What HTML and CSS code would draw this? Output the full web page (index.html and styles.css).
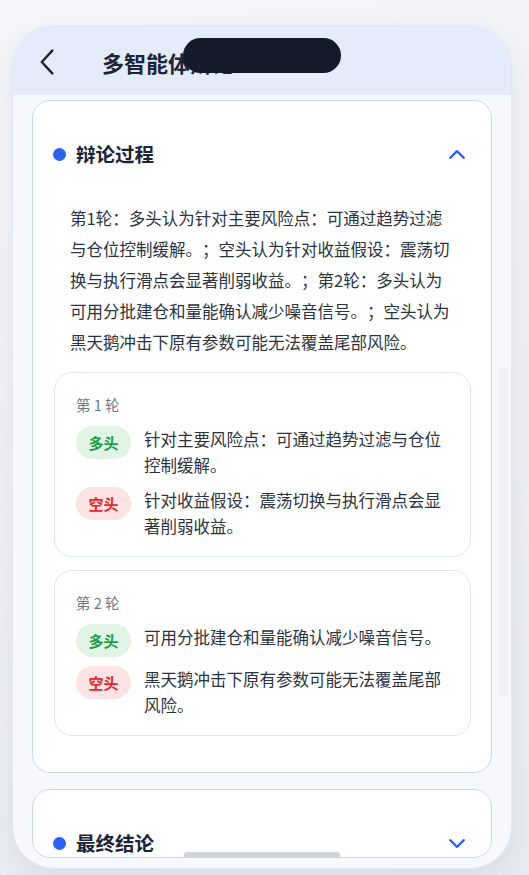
FILE: index.html
```html
<!DOCTYPE html>
<html lang="zh-CN">
<head>
    <meta charset="UTF-8">
    <meta name="viewport" content="width=device-width, initial-scale=1.0">
    <title>多智能体辩论</title>
    <link rel="stylesheet" href="styles.css">
</head>
<body>
    <div class="phone">
        <!-- Dynamic island -->
        <div class="notch"></div>

        <header class="topbar">
            <span class="back">
                <svg width="14" height="26" viewBox="0 0 14 26"><path d="M12.3 1.6 L1.8 13 L12.3 24.4" fill="none" stroke="#1b2438" stroke-width="2.4" stroke-linecap="round" stroke-linejoin="round"/></svg>
            </span>
            <h1>多智能体辩论</h1>
        </header>

        <main class="content">
            <section class="panel">
                <div class="panel-head">
                    <span class="dot"></span>
                    <h2>辩论过程</h2>
                    <svg class="chevron" width="20" height="20" viewBox="0 0 20 20"><path d="M3.2 13.8 L10 7.2 L16.8 13.8" fill="none" stroke="#2f66f0" stroke-width="2.3" stroke-linecap="round" stroke-linejoin="round"/></svg>
                </div>
                <div class="panel-body">
                    <p class="summary">第1轮：多头认为针对主要风险点：可通过趋势过滤与仓位控制缓解。；空头认为针对收益假设：震荡切换与执行滑点会显著削弱收益。；第2轮：多头认为可用分批建仓和量能确认减少噪音信号。；空头认为黑天鹅冲击下原有参数可能无法覆盖尾部风险。</p>

                    <div class="round">
                        <div class="round-title">第 1 轮</div>
                        <div class="view">
                            <span class="tag bull">多头</span>
                            <p>针对主要风险点：可通过趋势过滤与仓位控制缓解。</p>
                        </div>
                        <div class="view">
                            <span class="tag bear">空头</span>
                            <p>针对收益假设：震荡切换与执行滑点会显著削弱收益。</p>
                        </div>
                    </div>

                    <div class="round">
                        <div class="round-title">第 2 轮</div>
                        <div class="view">
                            <span class="tag bull">多头</span>
                            <p>可用分批建仓和量能确认减少噪音信号。</p>
                        </div>
                        <div class="view">
                            <span class="tag bear">空头</span>
                            <p>黑天鹅冲击下原有参数可能无法覆盖尾部风险。</p>
                        </div>
                    </div>
                </div>
            </section>

            <section class="panel">
                <div class="panel-head">
                    <span class="dot"></span>
                    <h2>最终结论</h2>
                    <svg class="chevron" width="20" height="20" viewBox="0 0 20 20"><path d="M3.2 7.2 L10 13.8 L16.8 7.2" fill="none" stroke="#2f66f0" stroke-width="2.3" stroke-linecap="round" stroke-linejoin="round"/></svg>
                </div>
            </section>
        </main>

        <div class="scroll-track"></div>
        <div class="home-bar"></div>
    </div>
</body>
</html>
```

FILE: styles.css
```css
body {
    margin: 0;
    padding: 25px 0 0 12px;
    height: 875px;
    box-sizing: border-box;
    overflow: hidden;
    font-family: 'Noto Sans CJK SC', 'Noto Sans', sans-serif;
    background: linear-gradient(160deg, #f5f6f9 0%, #e8ebf1 100%);
    color: #2b3342;
}

/* Phone frame */
.phone {
    position: relative;
    width: 500px;
    height: 844px;
    box-sizing: border-box;
    border: 1px solid #e1e7f3;
    border-radius: 42px;
    background-color: #f6f8fc;
    overflow: hidden;
    box-shadow: 0 12px 30px rgba(40, 55, 90, 0.08);
}

.notch {
    position: absolute;
    top: 12px;
    left: 50%;
    transform: translateX(-50%);
    width: 158px;
    height: 35px;
    border-radius: 18px;
    background-color: #141a29;
    z-index: 10;
}

/* Top bar */
.topbar {
    display: flex;
    align-items: center;
    height: 69px;
    padding: 2px 0 0 27px;
    box-sizing: border-box;
    background-color: #e4ebf9;
}

.back {
    display: flex;
    width: 14px;
    height: 26px;
}

.topbar h1 {
    margin: 0 0 0 48px;
    font-size: 22px;
    font-weight: 700;
    line-height: 30px;
    color: #1b2438;
}

/* Content */
.content {
    padding: 5px 19px 0 19px;
}

.panel {
    background-color: #fff;
    border: 1px solid #c9d6f6;
    border-radius: 18px;
}

.panel + .panel {
    margin-top: 16px;
}

.panel-head {
    display: flex;
    align-items: center;
    padding: 39px 24px 0 20px;
}

.dot {
    width: 13px;
    height: 13px;
    border-radius: 50%;
    background-color: #2c63ee;
    margin-right: 10px;
    flex-shrink: 0;
}

.panel-head h2 {
    flex: 1;
    margin: 0;
    font-size: 19.5px;
    font-weight: 700;
    line-height: 28px;
    color: #1b2438;
}

.chevron {
    flex-shrink: 0;
}

.panel-body {
    padding: 35px 20px 36px 21px;
}

.summary {
    margin: 0 0 14px;
    padding: 0 18px 0 16px;
    font-size: 16.5px;
    line-height: 31px;
    color: #2b3342;
    text-spacing-trim: space-all;
}

/* Round cards */
.round {
    border: 1px solid #dfe6f1;
    border-radius: 18px;
    padding: 22px 20px 17px 21px;
    background-color: #fff;
}

.round + .round {
    margin-top: 13px;
}

.round-title {
    font-size: 14.5px;
    line-height: 20px;
    color: #6b778c;
    margin-bottom: 11px;
}

.view {
    display: flex;
    align-items: flex-start;
    gap: 13px;
}

.view + .view {
    margin-top: 9px;
}

.view p {
    margin: 0;
    font-size: 16.5px;
    line-height: 26px;
    color: #2b3342;
    text-spacing-trim: space-all;
}

.tag {
    display: inline-flex;
    align-items: center;
    flex-shrink: 0;
    height: 33px;
    padding: 0 12.5px;
    border-radius: 17px;
    font-size: 15px;
    font-weight: 700;
}

.tag.bull {
    background-color: #e1f4e6;
    color: #1d9a48;
}

.tag.bear {
    background-color: #fde3e3;
    color: #e3262c;
}

/* Overlays */
.scroll-track {
    position: absolute;
    top: 341px;
    right: 3px;
    width: 9px;
    height: 331px;
    border-radius: 5px;
    background-color: #eef1f6;
}

.home-bar {
    position: absolute;
    bottom: 10px;
    left: 50%;
    transform: translateX(-50%);
    width: 156px;
    height: 6px;
    border-radius: 3px;
    background-color: #d0d3d9;
}
```
